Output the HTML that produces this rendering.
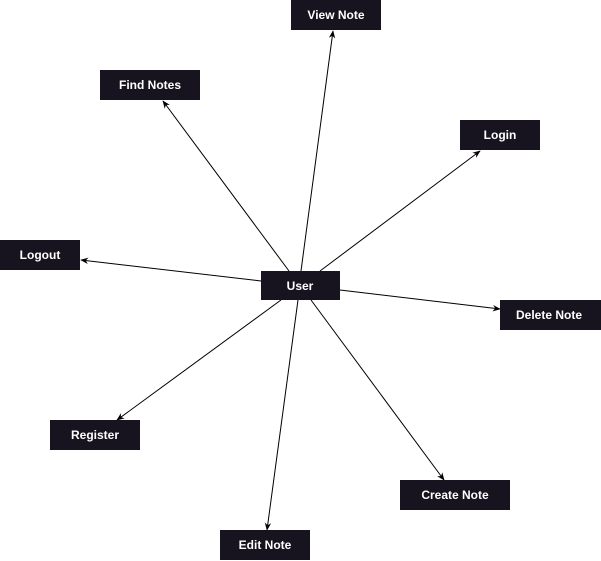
<!DOCTYPE html>
<html><head><meta charset="utf-8"><style>
html,body{margin:0;padding:0;background:#fff;width:601px;height:561px;overflow:hidden}
svg{display:block}
text{font-family:"Liberation Sans",sans-serif;font-size:12px;font-weight:bold;fill:#fff}
</style></head><body>
<svg width="601" height="561" viewBox="0 0 601 561">
<defs><marker id="a" viewBox="0 0 10 10" refX="9" refY="5" markerWidth="8" markerHeight="8" orient="auto-start-reverse" markerUnits="userSpaceOnUse"><path d="M0,1 L10,5 L0,9 L3,5 Z" fill="#000"/></marker></defs>
<g stroke="#000" stroke-width="1" fill="none" marker-end="url(#a)">
<line x1="301" y1="271" x2="333" y2="31"/>
<line x1="289" y1="271" x2="163" y2="101"/>
<line x1="320" y1="271" x2="480" y2="151"/>
<line x1="261" y1="281" x2="81" y2="260"/>
<line x1="340" y1="290" x2="500" y2="309"/>
<line x1="281" y1="300" x2="117" y2="420"/>
<line x1="311" y1="300" x2="444" y2="480"/>
<line x1="298" y1="300" x2="267" y2="530"/>
</g>
<g fill="#18141f">
<rect x="291" y="0" width="90" height="30"/>
<rect x="100" y="70" width="100" height="30"/>
<rect x="460" y="120" width="80" height="30"/>
<rect x="0" y="240" width="80" height="30"/>
<rect x="261" y="271" width="79" height="29"/>
<rect x="500" y="300" width="101" height="30"/>
<rect x="50" y="420" width="90" height="30"/>
<rect x="400" y="480" width="110" height="30"/>
<rect x="220" y="530" width="90" height="30"/>
</g>
<g text-anchor="middle">
<text x="336" y="19">View Note</text>
<text x="150" y="89">Find Notes</text>
<text x="500" y="139">Login</text>
<text x="40" y="259">Logout</text>
<text x="300" y="290">User</text>
<text x="549" y="319">Delete Note</text>
<text x="95" y="439">Register</text>
<text x="455" y="499">Create Note</text>
<text x="265" y="549">Edit Note</text>
</g>
</svg>
</body></html>
